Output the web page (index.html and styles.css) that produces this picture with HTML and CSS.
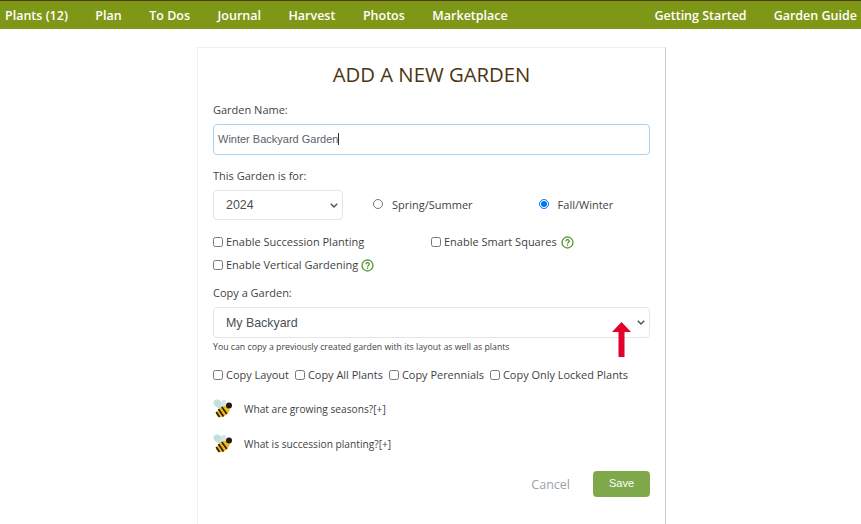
FILE: index.html
```html
<!DOCTYPE html>
<html lang="en">
<head>
<meta charset="utf-8">
<title>Add a new garden</title>
<link rel="stylesheet" href="styles.css">
</head>
<body>
<nav class="topbar">
  <div class="nav-group nav-main">
    <a class="nav-link">Plants (12)</a>
    <a class="nav-link">Plan</a>
    <a class="nav-link">To Dos</a>
    <a class="nav-link">Journal</a>
    <a class="nav-link">Harvest</a>
    <a class="nav-link">Photos</a>
    <a class="nav-link">Marketplace</a>
  </div>
  <div class="nav-group">
    <a class="nav-link">Getting Started</a>
    <a class="nav-link">Garden Guide</a>
  </div>
</nav>
<main class="card">
  <h1 class="title">ADD A NEW GARDEN</h1>
  <label class="label label-name">Garden Name:</label>
  <div class="name-input"><span class="name-text">Winter Backyard Garden</span><span class="caret"></span></div>
  <label class="label label-for">This Garden is for:</label>
  <div class="season-row">
    <select class="select select-year"><option>2024</option></select>
    <label class="radio radio-spring"><input type="radio" name="season"><span>Spring/Summer</span></label>
    <label class="radio radio-fall"><input type="radio" name="season" checked><span>Fall/Winter</span></label>
  </div>
  <div class="check-grid">
    <label class="check"><input type="checkbox"><span>Enable Succession Planting</span></label>
    <label class="check"><input type="checkbox"><span>Enable Smart Squares</span>
      <svg class="help help-lg" viewBox="0 0 14 14"><circle cx="7" cy="7" r="5.9" fill="none" stroke="#5f9a3e" stroke-width="1.5"/><path d="M5.2 5.6c0-2.3 3.7-2.3 3.7-.1 0 1.4-1.9 1.4-1.9 2.9" fill="none" stroke="#4f8a35" stroke-width="1.3"/><rect x="6.3" y="9.2" width="1.4" height="1.4" fill="#4f8a35"/></svg>
    </label>
    <label class="check"><input type="checkbox"><span>Enable Vertical Gardening</span>
      <svg class="help" viewBox="0 0 14 14"><circle cx="7" cy="7" r="5.9" fill="none" stroke="#5f9a3e" stroke-width="1.5"/><path d="M5.2 5.6c0-2.3 3.7-2.3 3.7-.1 0 1.4-1.9 1.4-1.9 2.9" fill="none" stroke="#4f8a35" stroke-width="1.3"/><rect x="6.3" y="9.2" width="1.4" height="1.4" fill="#4f8a35"/></svg>
    </label>
  </div>
  <label class="label label-copy">Copy a Garden:</label>
  <div class="copy-wrap">
    <select class="select select-copy"><option>My Backyard</option></select>
    <svg class="arrow" viewBox="0 0 19 35"><path d="M9.5 0 19 10H12.5V35H6.5V10H0z" fill="#e3002b"/></svg>
  </div>
  <p class="hint">You can copy a previously created garden with its layout as well as plants</p>
  <div class="copy-row">
    <label class="check"><input type="checkbox"><span>Copy Layout</span></label>
    <label class="check"><input type="checkbox"><span>Copy All Plants</span></label>
    <label class="check"><input type="checkbox"><span>Copy Perennials</span></label>
    <label class="check"><input type="checkbox"><span>Copy Only Locked Plants</span></label>
  </div>
  <div class="tip">
    <svg class="bee" viewBox="0 0 20 20"><ellipse cx="5.5" cy="5" rx="5.5" ry="3.8" transform="rotate(35 5.5 5)" fill="#c4e0dc"/><ellipse cx="10.5" cy="4.5" rx="2.4" ry="3.8" transform="rotate(10 10.5 4.5)" fill="#d6e8e4"/><ellipse cx="10" cy="12.5" rx="7.5" ry="4.6" transform="rotate(-35 10 12.5)" fill="#f0b91e"/><path d="M5.5 10l5 7.5M8.8 8l5 7M3.2 13l3.3 5" stroke="#2a2010" stroke-width="1.7" fill="none"/><circle cx="16" cy="6.5" r="3" fill="#1f1a10"/></svg>
    <span>What are growing seasons?[+]</span>
  </div>
  <div class="tip tip-second">
    <svg class="bee" viewBox="0 0 20 20"><ellipse cx="5.5" cy="5" rx="5.5" ry="3.8" transform="rotate(35 5.5 5)" fill="#c4e0dc"/><ellipse cx="10.5" cy="4.5" rx="2.4" ry="3.8" transform="rotate(10 10.5 4.5)" fill="#d6e8e4"/><ellipse cx="10" cy="12.5" rx="7.5" ry="4.6" transform="rotate(-35 10 12.5)" fill="#f0b91e"/><path d="M5.5 10l5 7.5M8.8 8l5 7M3.2 13l3.3 5" stroke="#2a2010" stroke-width="1.7" fill="none"/><circle cx="16" cy="6.5" r="3" fill="#1f1a10"/></svg>
    <span>What is succession planting?[+]</span>
  </div>
  <div class="actions">
    <a class="cancel">Cancel</a>
    <button class="save" type="button">Save</button>
  </div>
</main>
</body>
</html>
```

FILE: styles.css
```css
html, body {
  margin: 0;
  height: 524px;
  overflow: hidden;
  background: #fff;
}
body {
  font-family: "Open Sans", sans-serif;
  font-size: 11px;
  color: #3f3f3f;
}
.topbar {
  display: flex;
  justify-content: space-between;
  height: 28px;
  background: #7f9717;
  border-top: 1px solid #4b3a0c;
  padding: 0 4px 0 5px;
}
.nav-group {
  display: flex;
  gap: 27px;
  align-items: center;
}
.nav-main { gap: 27.5px; }
.nav-link {
  color: #fff;
  font-size: 12.5px;
  font-weight: 600;
}
.card {
  box-sizing: border-box;
  width: 469px;
  min-height: 520px;
  margin: 18px 0 0 197px;
  padding: 0 15px;
  border-top: 1px solid #eee;
  border-left: 1px solid #eee;
  border-right: 1px solid #ccc;
}
.title {
  margin: 13px 0 0;
  font-size: 20.3px;
  font-weight: 400;
  line-height: 27px;
  text-align: center;
  color: #4b3510;
}
.label {
  display: block;
  line-height: 16px;
  color: #444;
}
.label-name { margin-top: 14px; }
.name-input {
  box-sizing: border-box;
  display: flex;
  align-items: center;
  height: 31px;
  margin-top: 6px;
  padding: 0 0 2px 4px;
  border: 1px solid #a8d2f8;
  border-radius: 4px;
  font-family: "Liberation Sans", sans-serif;
  font-size: 11px;
  color: #5a6168;
}
.caret {
  width: 1px;
  height: 12px;
  background: #333;
}
.label-for { margin-top: 13px; }
.season-row {
  display: flex;
  align-items: center;
  margin-top: 6px;
  height: 30px;
}
.select {
  box-sizing: border-box;
  appearance: none;
  height: 30px;
  border: 1px solid #e6e6e6;
  border-radius: 4px;
  background: #fff url("data:image/svg+xml,%3Csvg xmlns='http://www.w3.org/2000/svg' width='8' height='5'%3E%3Cpath d='M.8.8 4 4 7.2.8' fill='none' stroke='%23495057' stroke-width='1.4'/%3E%3C/svg%3E") no-repeat right 4px center;
  padding-left: 12px;
  color: #495057;
  font-family: "Liberation Sans", sans-serif;
  font-size: 12.4px;
}
.select-year { width: 130px; }
.select-copy { width: 100%; height: 31px; display: block; }
.radio {
  display: flex;
  align-items: center;
  gap: 9px;
  margin-bottom: 2px;
}
.radio input {
  margin: 0;
  width: 10px;
  height: 10px;
}
.radio-spring { margin-left: 30px; }
.radio-fall { margin-left: 66px; }
.check-grid {
  display: grid;
  grid-template-columns: 218px 1fr;
  row-gap: 7px;
  margin-top: 14px;
}
.check {
  display: flex;
  align-items: center;
  gap: 3px;
  line-height: 16px;
}
.check input {
  margin: 0;
  width: 10px;
  height: 10px;
}
.help {
  width: 13px;
  height: 13px;
}
.help-lg { margin-left: 1px; }
.label-copy { margin-top: 12px; }
.copy-wrap {
  position: relative;
  margin-top: 6px;
}
.arrow {
  position: absolute;
  left: 399px;
  top: 15px;
  width: 19px;
  height: 35px;
}
.hint {
  margin: 3px 0 0;
  font-size: 8.75px;
  line-height: 12px;
  color: #444;
}
.copy-row {
  display: flex;
  gap: 6px;
  margin-top: 14px;
  font-size: 10.95px;
}
.tip {
  display: flex;
  align-items: center;
  gap: 11px;
  height: 20px;
  margin-top: 16px;
  font-size: 10.2px;
}
.tip-second { margin-top: 15px; }
.bee {
  width: 20px;
  height: 20px;
}
.actions {
  display: flex;
  justify-content: flex-end;
  align-items: center;
  gap: 23px;
  margin-top: 17px;
}
.cancel {
  color: #9aa3aa;
  font-size: 12.5px;
}
.save {
  width: 57px;
  height: 26px;
  border: 0;
  border-radius: 4px;
  background: #7fa84b;
  color: #fff;
  font-family: "Liberation Sans", sans-serif;
  font-size: 11px;
  padding: 0 0 2px;
}
```
